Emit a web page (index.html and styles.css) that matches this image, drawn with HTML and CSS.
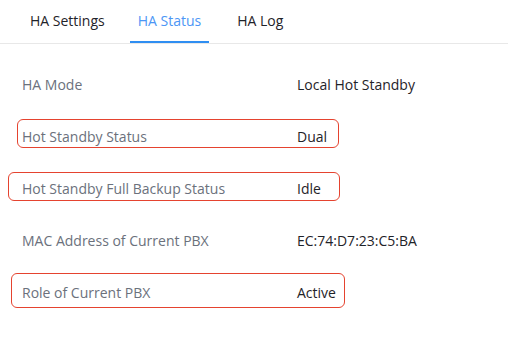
FILE: index.html
```html
<!DOCTYPE html>
<html lang="en">
<head>
  <meta charset="UTF-8" />
  <title>HA Status</title>
  <link rel="stylesheet" href="styles.css">
</head>
<body>
  <div class="tabs">
    <div class="tab">HA Settings</div>
    <div class="tab active">HA Status</div>
    <div class="tab">HA Log</div>
  </div>

  <div class="status-list">
    <div class="row">
      <span class="label">HA Mode</span>
      <span class="value">Local Hot Standby</span>
    </div>
    <div class="row">
      <span class="label">Hot Standby Status</span>
      <span class="value">Dual</span>
      <div class="mark mark-1"></div>
    </div>
    <div class="row">
      <span class="label">Hot Standby Full Backup Status</span>
      <span class="value">Idle</span>
      <div class="mark mark-2"></div>
    </div>
    <div class="row">
      <span class="label">MAC Address of Current PBX</span>
      <span class="value">EC:74:D7:23:C5:BA</span>
    </div>
    <div class="row">
      <span class="label">Role of Current PBX</span>
      <span class="value">Active</span>
      <div class="mark mark-3"></div>
    </div>
  </div>
</body>
</html>
```

FILE: styles.css
```css
body {
  margin: 0;
  background: #ffffff;
  font-family: 'Open Sans', 'Noto Sans', sans-serif;
  font-size: 14px;
  color: #1f2329;
}

.tabs {
  display: flex;
  padding-left: 22px;
  border-bottom: 1px solid #e8e8e8;
  height: 43px;
}

.tab {
  padding: 0 8px;
  margin-right: 17px;
  line-height: 41px;
  border-bottom: 2px solid transparent;
}

.tab:last-child {
  margin-left: 3px;
}

.tab.active {
  color: #4c96f5;
  border-bottom-color: #2f8ef2;
}

.status-list {
  padding-top: 14px;
}

.row {
  position: relative;
  display: flex;
  height: 52px;
  align-items: center;
  padding-left: 22px;
}

.label {
  width: 275px;
  color: #6b717c;
}

.value {
  color: #1f2329;
}

.mark {
  position: absolute;
  border: 1px solid #e5432f;
  border-radius: 6px;
}

.mark-1 { top: 9px; left: 17px; width: 320px; height: 27px; }
.mark-2 { top: 10px; left: 8px; width: 330px; height: 27px; }
.mark-3 { top: 7px; left: 11px; width: 332px; height: 33px; }
```
